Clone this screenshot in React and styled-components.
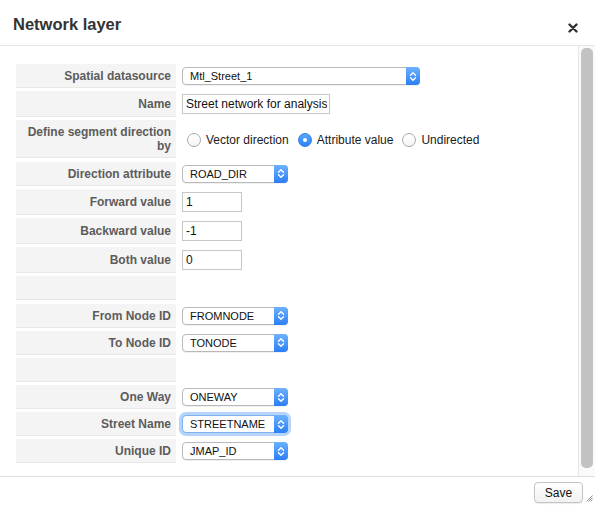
import React from 'react';
import styled, { createGlobalStyle, css } from 'styled-components';

const GlobalStyle = createGlobalStyle`
  html, body { margin: 0; padding: 0; background: #fff; }
  body { font-family: "Liberation Sans", Arial, Helvetica, sans-serif; }
`;

const Dialog = styled.div`
  width: 595px;
  height: 505px;
  display: flex;
  flex-direction: column;
  background: #fff;
  overflow: hidden;
`;

const Header = styled.div`
  height: 45px;
  border-bottom: 1px solid #e5e5e5;
  display: flex;
  align-items: flex-start;
  justify-content: space-between;
  padding: 0 17px 0 13px;
  flex-shrink: 0;
`;

const Title = styled.h2`
  margin: 14px 0 0 0;
  font-size: 16.5px;
  line-height: 20px;
  font-weight: 700;
  color: #333;
`;

const CloseButton = styled.button`
  margin-top: 23px;
  width: 10px;
  height: 10px;
  padding: 0;
  border: 0;
  background: none;
  cursor: pointer;
  display: flex;
`;

const Body = styled.div`
  height: 430px;
  display: flex;
  flex-shrink: 0;
`;

const Content = styled.div`
  flex: 1;
  padding: 18px 0 0 16px;
`;

const Scrollbar = styled.div`
  width: 12px;
  border-left: 1px solid #e6e6e6;
  background: #fafafa;
  padding: 2px 2px 8px 2px;
  display: flex;
`;

const Thumb = styled.div`
  flex: 1;
  border-radius: 5px;
  background: #c2c2c2;
`;

const Form = styled.div`
  display: grid;
  grid-template-columns: 160px 1fr;
  column-gap: 6px;
  row-gap: 3.2px;
`;

const Label = styled.div`
  min-height: 24px;
  box-sizing: border-box;
  background: #f4f4f4;
  border-bottom: 1px solid #e8e8e8;
  display: flex;
  align-items: center;
  justify-content: flex-end;
  text-align: right;
  padding: 5px 5px 4px 8px;
  font-size: 12px;
  line-height: 14px;
  font-weight: 700;
  color: #5c5c5c;
`;

const Value = styled.div`
  display: flex;
  align-items: center;
  padding: 3px 0;
`;

const SelectBox = styled.div`
  width: ${p => p.$width}px;
  height: 18px;
  box-sizing: border-box;
  display: flex;
  align-items: stretch;
  border: 1px solid #b9b9b9;
  border-radius: 4px;
  background: #fff;
  box-shadow: 0 1px 0 rgba(0, 0, 0, 0.06);
  ${p => p.$focused && css`
    border-color: #7fb0ef;
    box-shadow: 0 0 0 3px rgba(94, 160, 240, 0.45);
  `}
`;

const SelectText = styled.span`
  flex: 1;
  padding-left: 7px;
  font-size: 11px;
  line-height: 16px;
  color: #111;
  white-space: nowrap;
  overflow: hidden;
`;

const SelectArrow = styled.span`
  width: 14px;
  margin: -1px -1px -1px 0;
  border-radius: 0 4px 4px 0;
  background: linear-gradient(#6cb2ff, #2c7ef5);
  display: flex;
  align-items: center;
  justify-content: center;
`;

const TextInput = styled.input`
  width: ${p => p.$width}px;
  height: 20px;
  box-sizing: border-box;
  border: 1px solid #c6c6c6;
  border-radius: 0;
  padding: 0 2px 0 3px;
  margin: 0;
  font-family: "Liberation Sans", Arial, sans-serif;
  font-size: 12px;
  color: #111;
  outline: none;
`;

const RadioGroup = styled.div`
  display: flex;
  align-items: center;
  gap: 9px;
  padding: 1px 0 0 5px;
`;

const RadioOption = styled.label`
  display: flex;
  align-items: center;
  gap: 5px;
  font-size: 12px;
  color: #1a1a1a;
  cursor: pointer;
`;

const RadioDot = styled.span`
  width: 14px;
  height: 14px;
  box-sizing: border-box;
  border-radius: 50%;
  display: flex;
  align-items: center;
  justify-content: center;
  ${p => p.$checked ? css`
    background: linear-gradient(#5aa6fb, #2f83f4);
    border: 1px solid #2f7de6;
    &::after {
      content: '';
      width: 4px;
      height: 4px;
      border-radius: 50%;
      background: #fff;
    }
  ` : css`
    background: linear-gradient(#fff, #f5f5f5);
    border: 1px solid #a9a9a9;
  `}
`;

const Footer = styled.div`
  position: relative;
  flex: 1;
  border-top: 1px solid #e0e0e0;
  display: flex;
  justify-content: flex-end;
  align-items: flex-start;
  padding: 5px 12px 0 0;
`;

const SaveButton = styled.button`
  width: 49px;
  height: 21px;
  border: 1px solid #c4c4c4;
  border-radius: 4px;
  background: linear-gradient(#ffffff, #f1f1f1);
  box-shadow: 0 1px 1px rgba(0, 0, 0, 0.08);
  font-family: "Liberation Sans", Arial, sans-serif;
  font-size: 12px;
  color: #111;
  padding: 0;
  cursor: pointer;
`;

const Grip = styled.svg`
  position: absolute;
  right: 2px;
  bottom: 3px;
`;

const Chevrons = () => (
  <svg width="8" height="11" viewBox="0 0 8 11" fill="none">
    <path d="M1.5 4.2 L4 1.7 L6.5 4.2" stroke="#fff" strokeWidth="1.4" strokeLinecap="round" strokeLinejoin="round" />
    <path d="M1.5 6.8 L4 9.3 L6.5 6.8" stroke="#fff" strokeWidth="1.4" strokeLinecap="round" strokeLinejoin="round" />
  </svg>
);

const Select = ({ value, width = 106, focused }) => (
  <SelectBox $width={width} $focused={focused}>
    <SelectText>{value}</SelectText>
    <SelectArrow><Chevrons /></SelectArrow>
  </SelectBox>
);

const Radio = ({ label, checked }) => (
  <RadioOption>
    <RadioDot $checked={checked} />
    {label}
  </RadioOption>
);

const App = () => {
  return (
    <>
      <GlobalStyle />
      <Dialog>
        <Header>
          <Title>Network layer</Title>
          <CloseButton aria-label="Close">
            <svg width="10" height="10" viewBox="0 0 10 10">
              <path d="M1.5 1.5 L8.5 8.5 M8.5 1.5 L1.5 8.5" stroke="#333" strokeWidth="2.4" strokeLinecap="round" />
            </svg>
          </CloseButton>
        </Header>

        <Body>
          <Content>
            <Form>
              <Label>Spatial datasource</Label>
              <Value><Select value="Mtl_Street_1" width={238} /></Value>

              <Label>Name</Label>
              <Value><TextInput $width={148} defaultValue="Street network for analysis" /></Value>

              <Label>Define segment direction by</Label>
              <Value>
                <RadioGroup>
                  <Radio label="Vector direction" />
                  <Radio label="Attribute value" checked />
                  <Radio label="Undirected" />
                </RadioGroup>
              </Value>

              <Label>Direction attribute</Label>
              <Value><Select value="ROAD_DIR" /></Value>

              <Label>Forward value</Label>
              <Value><TextInput $width={60} defaultValue="1" /></Value>

              <Label>Backward value</Label>
              <Value><TextInput $width={60} defaultValue="-1" /></Value>

              <Label>Both value</Label>
              <Value><TextInput $width={60} defaultValue="0" /></Value>

              <Label />
              <Value />

              <Label>From Node ID</Label>
              <Value><Select value="FROMNODE" /></Value>

              <Label>To Node ID</Label>
              <Value><Select value="TONODE" /></Value>

              <Label />
              <Value />

              <Label>One Way</Label>
              <Value><Select value="ONEWAY" /></Value>

              <Label>Street Name</Label>
              <Value><Select value="STREETNAME" focused /></Value>

              <Label>Unique ID</Label>
              <Value><Select value="JMAP_ID" /></Value>
            </Form>
          </Content>
          <Scrollbar><Thumb /></Scrollbar>
        </Body>

        <Footer>
          <SaveButton>Save</SaveButton>
          <Grip width="7" height="7" viewBox="0 0 7 7">
            <path d="M6.5 0.5 L0.5 6.5 M6.5 2.5 L2.5 6.5 M6.5 4.5 L4.5 6.5" stroke="#777" strokeWidth="0.8" />
          </Grip>
        </Footer>
      </Dialog>
    </>
  );
};

export default App;
